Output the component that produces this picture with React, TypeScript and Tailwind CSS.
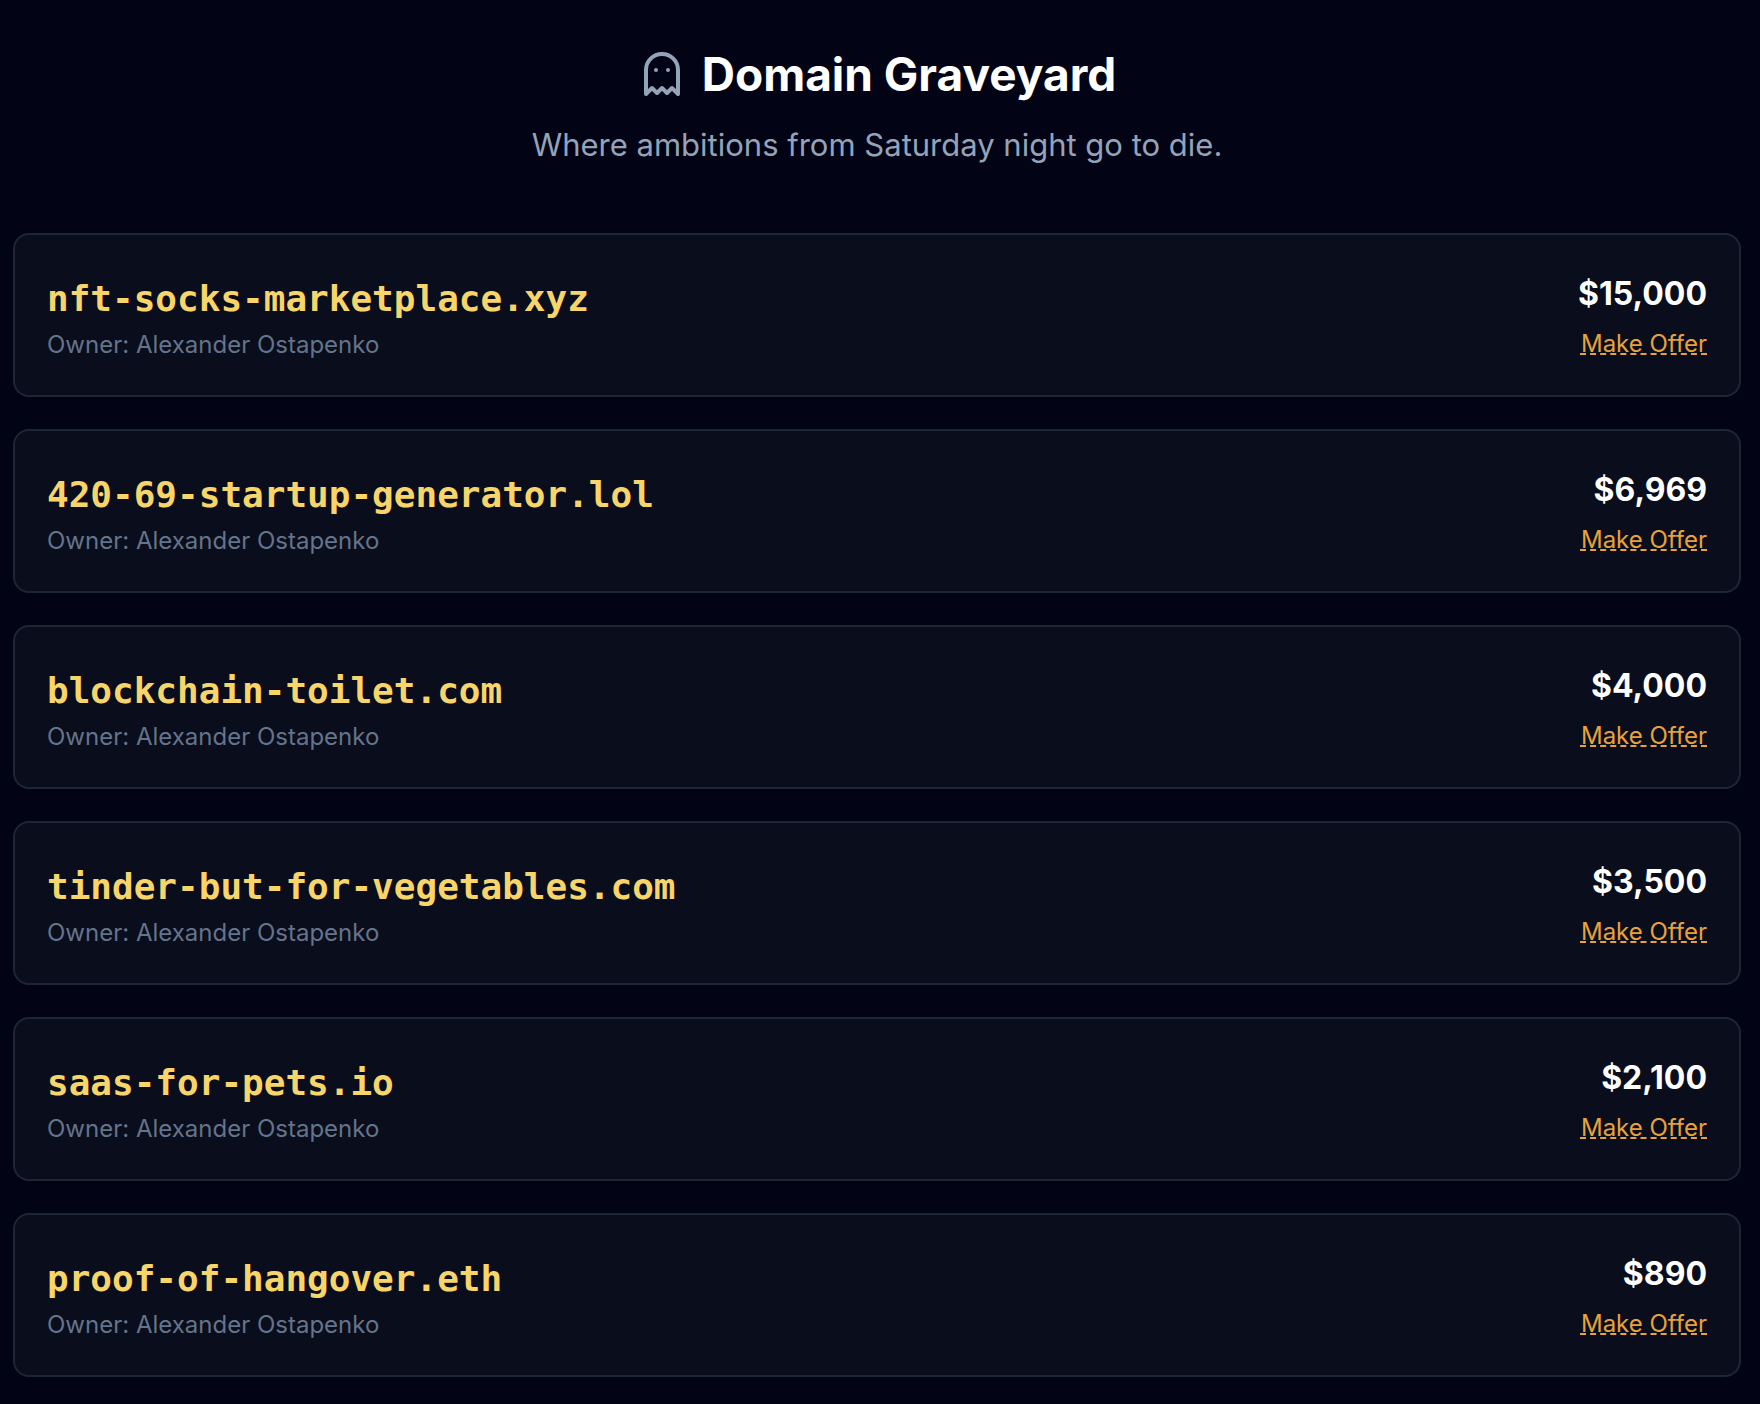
import React from 'react';
import { Ghost } from 'lucide-react';

interface Domain {
  name: string;
  owner: string;
  price: string;
}

const DOMAINS: Domain[] = [
  { name: 'nft-socks-marketplace.xyz', owner: 'Alexander Ostapenko', price: '$15,000' },
  { name: '420-69-startup-generator.lol', owner: 'Alexander Ostapenko', price: '$6,969' },
  { name: 'blockchain-toilet.com', owner: 'Alexander Ostapenko', price: '$4,000' },
  { name: 'tinder-but-for-vegetables.com', owner: 'Alexander Ostapenko', price: '$3,500' },
  { name: 'saas-for-pets.io', owner: 'Alexander Ostapenko', price: '$2,100' },
  { name: 'proof-of-hangover.eth', owner: 'Alexander Ostapenko', price: '$890' },
];

const DomainCard: React.FC<{ domain: Domain }> = ({ domain }) => (
  <li className="flex items-center justify-between rounded-2xl border-2 border-[#1e2636] bg-[#0a0d1c] px-8 pt-9 pb-8">
    <div>
      <h2 className="font-['DejaVu_Sans_Mono',monospace] text-[36px] leading-[56px] font-bold text-[#f8d568]">
        {domain.name}
      </h2>
      <p className="text-[24px] leading-9 text-[#64748b]">Owner: {domain.owner}</p>
    </div>
    <div className="flex flex-col items-end gap-[14px]">
      <div className="text-[32px] leading-10 font-bold text-white">{domain.price}</div>
      <button
        type="button"
        className="cursor-pointer text-[24px] leading-8 text-[#e9a23b] underline decoration-dashed decoration-2 underline-offset-1"
      >
        Make Offer
      </button>
    </div>
  </li>
);

export default function App() {
  return (
    <main className="min-h-screen bg-[#020415] pt-12 pr-[19px] pb-7 pl-[13px] font-['Inter',sans-serif]">
      <header className="mb-[67px] text-center">
        <h1 className="flex items-center justify-center gap-4 text-[46px] leading-[52px] font-bold text-white">
          <Ghost className="h-12 w-12 text-[#94a3b8]" aria-hidden="true" />
          Domain Graveyard
        </h1>
        <p className="mt-6 text-[31px] leading-[42px] text-[#94a3b8]">
          Where ambitions from Saturday night go to die.
        </p>
      </header>

      <ul className="flex flex-col gap-8">
        {DOMAINS.map((domain) => (
          <DomainCard key={domain.name} domain={domain} />
        ))}
      </ul>
    </main>
  );
}
